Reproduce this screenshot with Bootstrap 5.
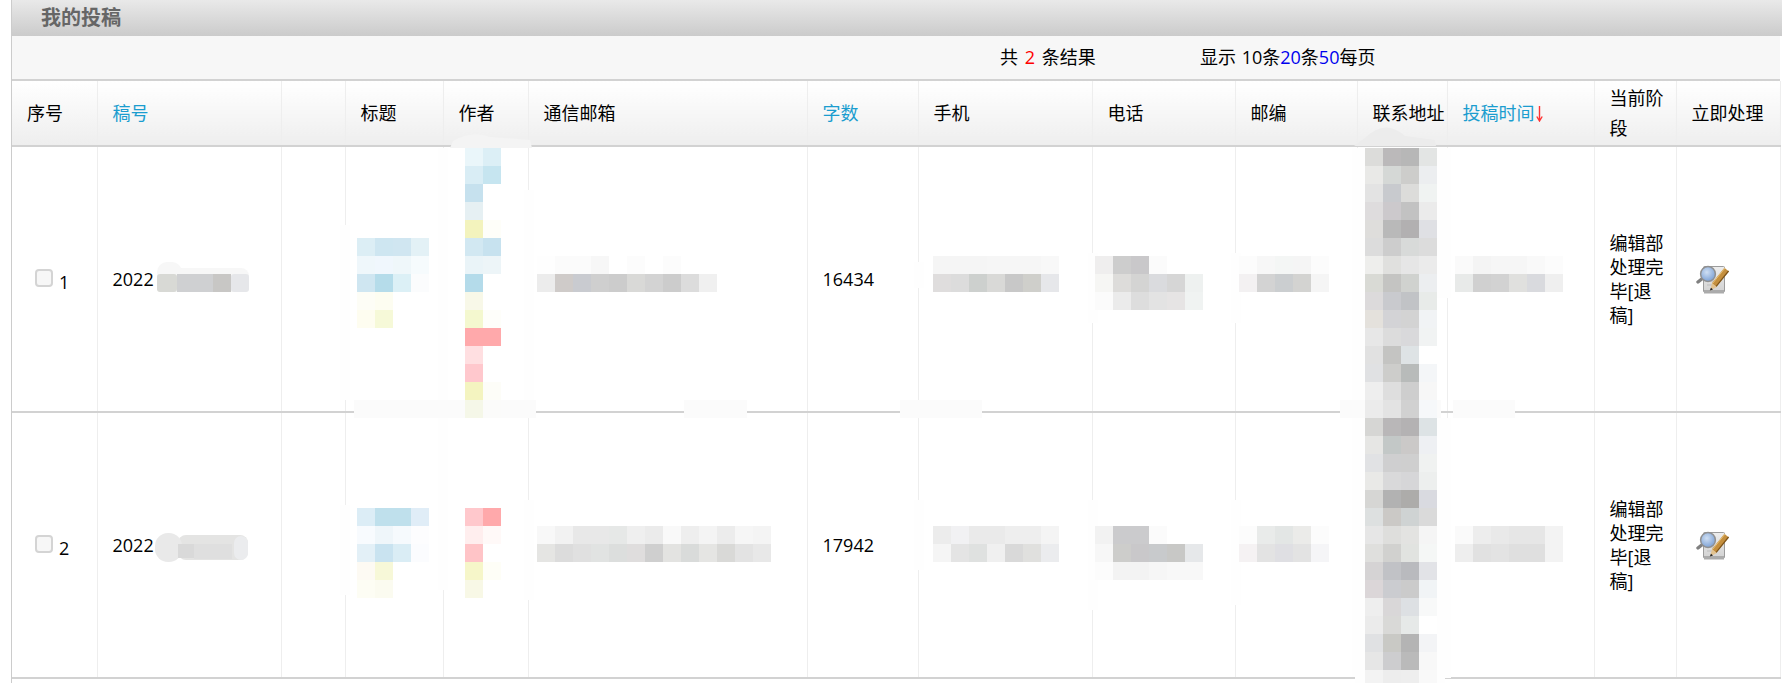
<!DOCTYPE html>
<html lang="zh">
<head>
<meta charset="utf-8">
<title>我的投稿</title>
<link href="https://cdn.jsdelivr.net/npm/bootstrap@5.3.0/dist/css/bootstrap.min.css" rel="stylesheet">
<style>
html,body{height:100%;overflow:hidden;background:#fff}
body{font-family:"Open Sans","Noto Sans CJK SC","Liberation Sans",sans-serif;font-size:18px;color:#000}
.shell{position:relative;width:1782px;height:683px;padding-left:11px;padding-right:2px}
.frame{height:683px;border-left:1px solid #ccc}
.title-bar{height:36px;margin-right:-2px;padding-left:29px;line-height:36px;font-size:20px;font-weight:700;color:#666;background:linear-gradient(#e9e9e9,#cbcbcb)}
.tool-bar{height:45px;background:#f7f7f7;border-bottom:2px solid #d2d2d2;padding-left:988px;padding-bottom:1px;word-spacing:1px}
.tool-total{width:200px;word-spacing:2px}
.hot{color:#f00}
.blue{color:#00e}
.grid{table-layout:fixed;width:1768px;border-collapse:collapse;margin:0;--bs-table-bg:transparent;--bs-table-color:#000}
.grid th,.grid td{border-color:#eee;border-style:solid;border-width:0 1px 2px 1px;border-bottom-color:#d2d2d2;padding:0 2px 0 15px;vertical-align:middle;overflow:visible}
.grid th:first-child,.grid td:first-child{border-left:0}
.grid th{height:65px;font-weight:400;line-height:30px;background:linear-gradient(#fff,#eee);white-space:normal}
.grid td{height:266px;line-height:24px}
.grid .stage{padding-right:10px}
.grid .tight{white-space:nowrap;padding-right:0}
.w1{width:85px}.w2{width:184px}.w3{width:64px}.w4{width:98px}.w5{width:85px}.w6{width:279px}.w7{width:111px}
.w8{width:174px}.w9{width:143px}.w10{width:122px}.w11{width:90px}.w12{width:147px}.w13{width:82px}.w14{width:104px}
.grid th.sort{color:#1b9dcf}
.arrow{display:inline-block;vertical-align:-2px;margin-left:1px}
.pick{appearance:none;display:inline-block;width:18px;height:18px;margin:0 6px 0 9px;background:#f7f7f7;border:2px solid #d4d4d4;border-radius:4px;vertical-align:-1px}
.seq{position:relative;top:3px}
.grid td:first-child{padding-left:14px}
.pen{display:block;margin-left:4px}
.smear{position:absolute;left:0;top:0;pointer-events:none}
</style>
</head>
<body>
<div class="shell">
  <div class="frame">
    <div class="title-bar">我的投稿</div>
    <div class="tool-bar d-flex align-items-center">
      <div class="tool-total">共 <span class="hot">2</span> 条结果</div>
      <div>显示 10条<span class="blue">20</span>条<span class="blue">50</span>每页</div>
    </div>
    <table class="table grid">
      <colgroup>
        <col class="w1"><col class="w2"><col class="w3"><col class="w4"><col class="w5"><col class="w6"><col class="w7">
        <col class="w8"><col class="w9"><col class="w10"><col class="w11"><col class="w12"><col class="w13"><col class="w14">
      </colgroup>
      <thead>
        <tr>
          <th>序号</th><th class="sort">稿号</th><th></th><th>标题</th><th>作者</th><th>通信邮箱</th><th class="sort">字数</th>
          <th>手机</th><th>电话</th><th>邮编</th><th class="tight">联系地址</th><th class="sort tight">投稿时间<svg class="arrow" width="7" height="17" viewBox="0 0 7 17"><path d="M3.5 1V15M.8 11.5 3.5 16 6.2 11.5" fill="none" stroke="#f33" stroke-width="1.4"/></svg></th>
          <th class="stage">当前阶段</th><th>立即处理</th>
        </tr>
      </thead>
      <tbody>
        <tr>
          <td><input type="checkbox" class="pick" aria-label="1"><span class="seq">1</span></td><td>2022</td><td></td><td></td><td></td><td></td><td>16434</td>
          <td></td><td></td><td></td><td></td><td></td><td class="stage">编辑部处理完毕[退稿]</td>
          <td><svg class="pen" width="34" height="29" viewBox="0 0 34 29"><use href="#pen-icon"/></svg></td>
        </tr>
        <tr>
          <td><input type="checkbox" class="pick" aria-label="2"><span class="seq">2</span></td><td>2022</td><td></td><td></td><td></td><td></td><td>17942</td>
          <td></td><td></td><td></td><td></td><td></td><td class="stage">编辑部处理完毕[退稿]</td>
          <td><svg class="pen" width="34" height="29" viewBox="0 0 34 29"><use href="#pen-icon"/></svg></td>
        </tr>
      </tbody>
    </table>
  </div>
  <svg class="smear" id="smear" width="1782" height="683" viewBox="0 0 1782 683"></svg>
</div>
<svg width="0" height="0" class="position-absolute">
  <defs>
    <radialGradient id="lens" cx="42%" cy="38%" r="62%"><stop offset="0" stop-color="#cfdff3"/><stop offset="1" stop-color="#7fa3d6"/></radialGradient>
    <linearGradient id="sheet" x1="0" y1="0" x2="0" y2="1"><stop offset="0" stop-color="#ededed"/><stop offset="1" stop-color="#d2d2d2"/></linearGradient>
    <g id="pen-icon">
      <rect x="7.5" y="1.5" width="21" height="25.5" rx="1" fill="url(#sheet)" stroke="#9c9c9c"/>
      <rect x="8" y="25" width="20" height="3.5" fill="#ababab"/>
      <path d="M11 20H19M11 16H20" stroke="#bdbdbd"/>
      <path d="M2 17 7 13" stroke="#808080" stroke-width="3.4" stroke-linecap="round"/>
      <circle cx="12" cy="9" r="7.4" fill="url(#lens)" stroke="#909090" stroke-width="1.5"/>
      <path d="M30.5 4.5 18 20" stroke="#c48f3e" stroke-width="5.4"/>
      <path d="M32.6 6 20 21.6" stroke="#7d5318" stroke-width="1.2"/>
      <path d="M29 3 16.5 18.5" stroke="#e6c078" stroke-width="1"/>
      <path d="M16 18.2 20.8 22 14 25.5Z" fill="#e2c391"/>
      <path d="M15 22.8 17 24.4 13.8 25.6Z" fill="#222"/>
    </g>
  </defs>
</svg>
<script>
const W='fff';
const blocks=[
 [465,148,[['eaf6fa','dceff6'],['d9edf5','c6e5f0'],['c6e1ee',W],['e6f0f3',W],['f3f3bd','fefef9'],['d2e8f2','c7e2ef'],['eaf4f8','edf5f8'],['b4dbea',W],['f8f8e8',W],['f4f8cf','fefefa'],['ffa9ab','ffa9ab'],['ffdfe1',W],['ffc8cd',W],['f4f4c0','fdfdf8'],['f5f7e8','fbfbfa']]],
 [357,238,[['dceef5','cee6f1','d0e6f1','e3f1f6'],['eff7fb','f0f7fd','eff7fa','f6fbfd'],['cfe6f1','b5dcea','dcf0f6','fbfcfd'],['fdfdf6','fdfdf1',W,W],['fefdf0','f6f9d8',W,W]]],
 [537,256,[['fefefe','fbfbfb','fbfbfb','f7f7f7',W,'fcfcfc',W,'fcfcfc',W,W],['ececec','cfcbc9','c9cbd0','cfcfcf','cccccc','d9d9d7','d3d3d3','cccccc','dcdcdc','f0f0f0']]],
 [933,256,[['f5f5f5','f5f5f5','f5f5f5','f6f6f6','f6f6f6','f6f6f6','f8f8f8'],['dfdddd','dcdcdc','cdd0ce','d9d9d7','c8c8c8','cfcfcb','e6e7ea']]],
 [1095,256,[['efeeee','cdcdcd','c9c8ca','fbfbfb',W,W],['f6f6f4','dddcda','d4d4d3','dadbde','d6d6d6','eef1f0'],['fbfbfb','ebebeb','dddddd','e3e3e3','e6e4e4','f0f3f2']]],
 [1239,256,[['fcfcfc','f7f7f7','f4f6f5','f5f5f5','fcfcfc'],['f3f1f2','d3d3d3','cbced0','d3d3d1','f5f5f5']]],
 [1455,256,[['fafafa','f4f4f4','f6f6f6','f6f6f6','f9f9f9','fcfcfc'],['e8eae9','d0d0d0','d2d2d2','e0e0de','d9dade','efefef']]],
 [1365,148,[['dcdcda','bbb9ba','b7b7b7','e3e5e4'],['e9e9e7','d5d8d6','cdcdcb','eceef0'],['e3e3e3','c8cace','dcdcda','f0f3f2'],['dedcdd','ccc9cc','c2c2c2','ebebeb'],['dedddb','b9b9b9','b2b0b1','dfe0e4'],['dcdcdc','cdcdcd','d8dad9','dcdcdc'],['eeeeec','e0e0de','e6e6e6','ebebeb'],['d9dad5','c4c4c2','d0d2cf','eceef0'],['dcdadb','c9cace','c1c3c6','e8ebe9'],['e4e1dc','d3d3d6','d3d3d3','f1f3f5'],['e7e7e7','dcdcdc','d9d9db','f1f3f3'],['e1e1e1','c4c4c2','dee3e5',W],['e0e1e3','cdcdcb','b8bbba','f4f6f8'],['eeeeee','dedede','cecece','f7f7f7'],['ebebeb','e3e3e3','d1d1d1','f6f8fa'],
  ['d6d6d4','b9b7b8','b4b2b3','dde3e5'],['e6e6e4','c3c8c7','cbc9c8','eef0f3'],['e1e2e4','cfcfd0','cfcfcf','f0f2f1'],['e9e9e7','d9d9da','d6d6d8','edefee'],['d6d6d4','b2b2b2','adacaa','d9dae0'],['dde0e0','cbc9c6','cfd3d3','dadada'],['e6e6e6','dededc','e3e3e1','f5f5f5'],['dfdfdd','d1d1cf','e1e3e0','f5f7f6'],['d5d3d4','c1c2c6','b9babe','e2e3e7'],['dbd6d8','cbccd0','cbcbcb','f1f4f6'],['eeeeee','d9d7d8','dde0e3','f8f9f9'],['ebebeb','d9d9d7','e6e9e8',W],['e0e1e3','c9c9c5','b4b4b4','f3f4f6'],['e6e6e6','cdcdcf','bababa','f8f8f8'],['f3f3f3','ededed','eeeeee','f9f9f9']]],
 [357,508,[['dcedf6','bfe0ec','bfe0ec','e0edf7'],['f8fbfe','eff6fa','f6fafd','fdfdfe'],['e3f0f7','c9e3f0','daedf5','fbfcfe'],['fdfaf3','f7f8d8',W,W],['fdfdf4','fbfbf0',W,W]]],
 [465,508,[['ffc8cc','ffa9ab'],['ffeeee','fff9f8'],['ffc4c7',W],['f6f6c9','fefef7'],['f8f8e6',W]]],
 [537,526,[['f8f8f8','f2f2f2','e8e8e8','e8e8e8','e6e8e7','efefef','ebebeb','f9f9f9','eeeeee','f4f4f4','ececec','f6f6f6','f4f4f4'],['e5e5e3','dcdcdc','e0e0e0','e1e3e2','dcdedd','dfdddd','cfcfcf','e3e3e1','d9dbda','e5e5e3','d9d9d7','e3e3e3','e8e8e8']]],
 [933,526,[['ececec','f1f1f3','eaeaea','eaeaea','eeeeee','eeeeee','f4f4f4'],['f5f5f5','e4e4e4','dfe1e0','f0f0f0','d9d9d9','e0e0de','ebecee']]],
 [1095,526,[['f2f2f2','cbcbcd','cbcbcd','fbfbfb',W,W],['f7f7f7','cdcdcb','c9c8ca','c8cacc','c8c8c6','e6e8ea'],['fcfcfc','f3f3f3','f3f3f3','f6f6f6','f8f8f8','f8f8f8']]],
 [1239,526,[['fcfcfc','e9ebea','e3e6e5','ebebe9','fcfcfc'],['f5f2f3','e3e3e3','dfdfe3','e3e3e3','f5f5f7']]],
 [1455,526,[['fafafa','ededed','e9e9e9','e6e6e6','e6e6e6','f3f3f3'],['eeeeee','e1e1e1','e3e3e3','dfdfdf','dfdfdf','f3f3f3']]]
];
const patches=[
 [340,225,10,175,'fefefe'],[438,148,10,252,'fefefe'],[524,190,10,210,'fefefe'],[914,262,10,26,'fefefe'],[1088,253,10,70,'fefefe'],[1231,253,10,70,'fefefe'],
 [1352,148,13,529,'fefefe'],[1437,418,14,260,'fefefe'],[1437,148,14,150,'fefefe'],
 [340,505,10,90,'fefefe'],[438,418,10,172,'fefefe'],[524,500,10,100,'fefefe'],[914,500,10,70,'fefefe'],[1088,500,10,110,'fefefe'],[1231,500,10,105,'fefefe'],[1443,510,8,70,'fefefe'],
 [354,400,182,18,'fbfbfb'],[684,400,63,18,'fbfbfb'],[900,400,82,18,'fbfbfb'],[1453,400,62,18,'fbfbfb'],[1340,400,25,18,'fbfbfb'],[1437,400,4,18,'fbfbfb'],
 [1355,672,10,11,'fefefe'],[1437,672,8,11,'fefefe']
];
const NS='http://www.w3.org/2000/svg', svg=document.getElementById('smear');
function rect(x,y,w,h,c,r){const e=document.createElementNS(NS,'rect');e.setAttribute('x',x);e.setAttribute('y',y);e.setAttribute('width',w);e.setAttribute('height',h);e.setAttribute('fill','#'+c);if(r)e.setAttribute('rx',r);svg.appendChild(e);}
function path(d,c){const e=document.createElementNS(NS,'path');e.setAttribute('d',d);e.setAttribute('fill','#'+c);svg.appendChild(e);}
patches.forEach(p=>rect(...p));
path('M450 148 L453 141 Q472 130 490 137 L530 140 L532 148Z','f4f4f4');
path('M1354 146 L1365 138 Q1385 118 1405 136 L1435 140 L1436 146Z','ececec');
// number smudges
rect(157,268,92,24,'f7f7f7',8);rect(157,262,25,20,'f7f7f7',10);
rect(157,274,20,18,'d8d9d5',3);rect(177,274,36,18,'cfd0d2');rect(213,274,18,18,'c8c7c5');rect(231,274,18,18,'e6e7ea',3);
rect(178,535,70,25,'e4e4e3',8);rect(155,533,27,29,'e9e9e9',13);rect(234,536,14,24,'ebecee',7);
rect(178,544,16,14,'d9d9d9');rect(194,544,38,15,'dfdfdf');
blocks.forEach(([x,y,rows])=>rows.forEach((r,i)=>r.forEach((c,j)=>{if(c!==W)rect(x+j*18,y+i*18,18,18,c);})));
</script>
<script src="https://cdn.jsdelivr.net/npm/bootstrap@5.3.0/dist/js/bootstrap.bundle.min.js"></script>
</body>
</html>
